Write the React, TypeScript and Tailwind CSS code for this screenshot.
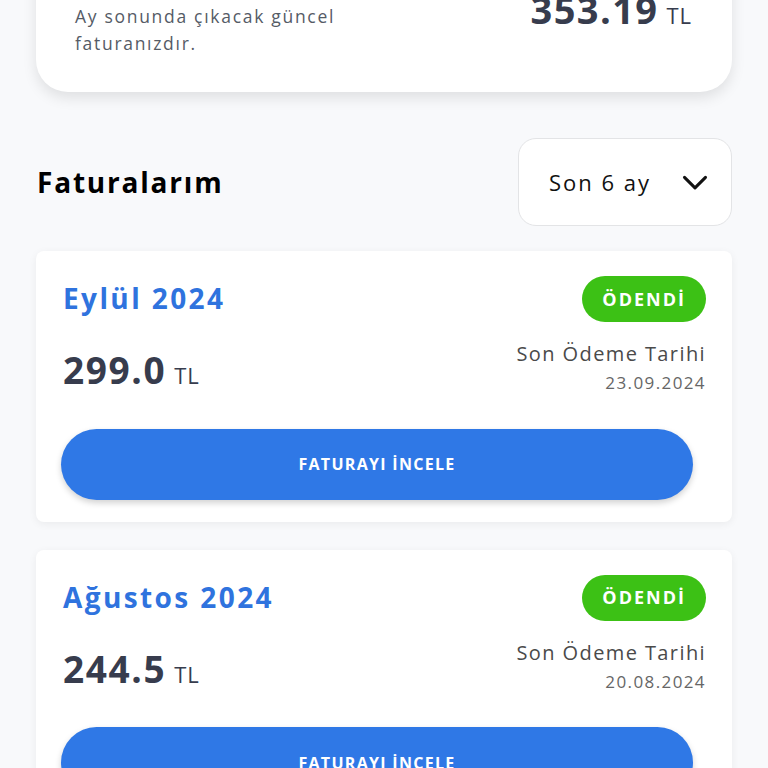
import React from "react";

function Invoice({ title, amount, date }: { title: string; amount: string; date: string }) {
  return (
    <div className="mx-[36px] bg-white rounded-[8px] shadow-[0_2px_8px_rgba(0,0,0,0.06)] pt-[24px] pb-[22px] pl-[27px] pr-[26px]">
      <div className="flex items-center justify-between h-[48px]">
        <div className="text-[28px] font-bold text-[#2f73de] tracking-[2.4px] -mt-[2px]">{title}</div>
        <div className="h-[46px] px-[20px] rounded-full bg-[#3cc115] text-white font-bold text-[18px] flex items-center tracking-[2px]">ÖDENDİ</div>
      </div>
      <div className="flex justify-between mt-[16px]">
        <div className="flex items-baseline mt-[3px]">
          <span className="text-[37px] font-bold text-[#373c4d] tracking-[1.6px]">{amount}</span>
          <span className="text-[22px] text-[#373c4d] ml-[8px] tracking-[1px]">TL</span>
        </div>
        <div className="text-right">
          <div className="text-[20px] text-[#4a4a4a] leading-[30px] tracking-[1.4px]">Son Ödeme Tarihi</div>
          <div className="text-[17px] text-[#666] leading-[28px] tracking-[1.4px]">{date}</div>
        </div>
      </div>
      <div className="mt-[31px] mr-[13px] -ml-[2px] h-[71px] rounded-full bg-[#2f78e6] shadow-[0_3px_6px_rgba(0,0,0,0.18)] flex items-center justify-center text-white font-bold text-[16px] tracking-[1.3px]">
        FATURAYI İNCELE
      </div>
    </div>
  );
}

export default function App() {
  return (
    <div className="w-[768px] h-[768px] overflow-hidden bg-[#f8f9fb]" style={{ fontFamily: '"Open Sans", "Noto Sans", sans-serif' }}>
      <div className="mx-[36px] -mt-[60px] h-[152px] bg-white rounded-[32px] shadow-[0_6px_14px_rgba(0,0,0,0.10)] pl-[39px] pr-[40px] flex justify-between">
        <div className="pt-[63px] text-[17.5px] leading-[27px] text-[#555b66] tracking-[1.7px]">
          Ay sonunda çıkacak güncel<br />faturanızdır.
        </div>
        <div className="flex items-baseline pt-[44px]">
          <span className="text-[38px] font-bold text-[#373c4d] tracking-[1.4px] leading-[50px]">353.19</span>
          <span className="text-[22px] text-[#373c4d] ml-[8px] tracking-[1px]">TL</span>
        </div>
      </div>

      <div className="flex items-center justify-between mt-[46px] ml-[37px] mr-[36px]">
        <div className="text-[28px] font-bold text-black tracking-[1.8px]">Faturalarım</div>
        <div className="w-[214px] h-[88px] bg-white rounded-[18px] border border-[#e3e4e6] flex items-center pl-[30px] pr-[22px] justify-between">
          <span className="text-[22px] text-[#111] tracking-[2px]">Son 6 ay</span>
          <svg width="28" height="28" viewBox="0 0 24 24" fill="none" stroke="#111" strokeWidth="2.6" strokeLinecap="round" strokeLinejoin="round">
            <path d="M3 8l9 9 9-9" />
          </svg>
        </div>
      </div>

      <div className="mt-[25px] flex flex-col gap-[28px]">
        <Invoice title="Eylül 2024" amount="299.0" date="23.09.2024" />
        <Invoice title="Ağustos 2024" amount="244.5" date="20.08.2024" />
      </div>
    </div>
  );
}
